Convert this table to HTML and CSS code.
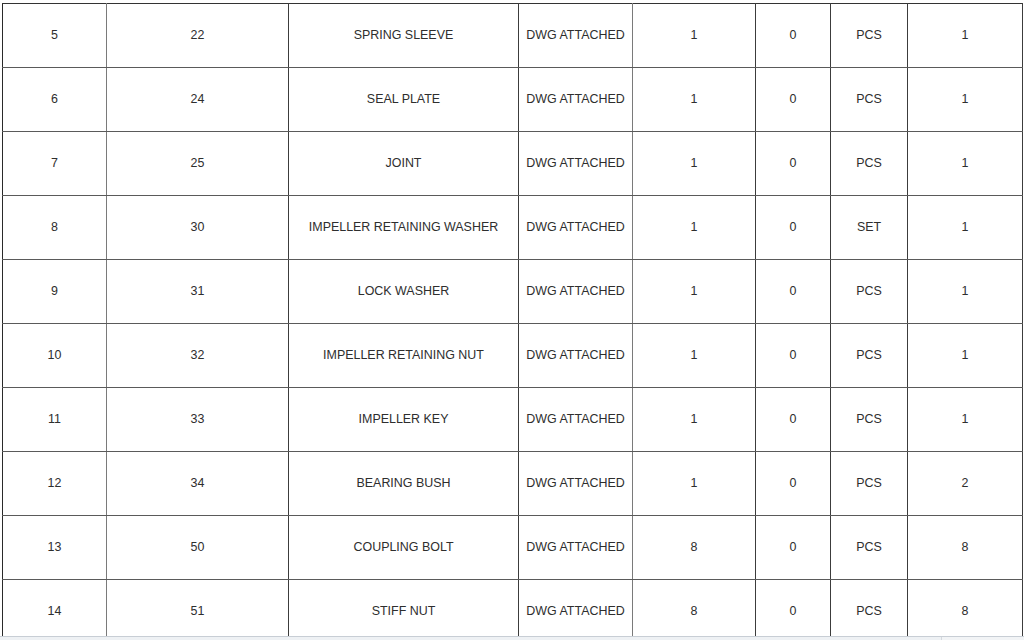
FILE: index.html
```html
<!DOCTYPE html>
<html>
<head>
<meta charset="utf-8">
<link rel="stylesheet" href="styles.css">
</head>
<body>
<div class="wrap">
<table class="parts">
<colgroup>
<col class="c1"><col class="c2"><col class="c3"><col class="c4"><col class="c5"><col class="c6"><col class="c7"><col class="c8">
</colgroup>
<tbody>
<tr><td class="soft">5</td><td>22</td><td>SPRING SLEEVE</td><td class="soft">DWG ATTACHED</td><td>1</td><td>0</td><td>PCS</td><td>1</td></tr>
<tr><td class="soft">6</td><td>24</td><td>SEAL PLATE</td><td class="soft">DWG ATTACHED</td><td>1</td><td>0</td><td>PCS</td><td>1</td></tr>
<tr><td class="soft">7</td><td>25</td><td>JOINT</td><td class="soft">DWG ATTACHED</td><td>1</td><td>0</td><td>PCS</td><td>1</td></tr>
<tr><td class="soft">8</td><td>30</td><td>IMPELLER RETAINING WASHER</td><td class="soft">DWG ATTACHED</td><td>1</td><td>0</td><td>SET</td><td>1</td></tr>
<tr><td class="soft">9</td><td>31</td><td>LOCK WASHER</td><td class="soft">DWG ATTACHED</td><td>1</td><td>0</td><td>PCS</td><td>1</td></tr>
<tr><td class="soft">10</td><td>32</td><td>IMPELLER RETAINING NUT</td><td class="soft">DWG ATTACHED</td><td>1</td><td>0</td><td>PCS</td><td>1</td></tr>
<tr><td class="soft">11</td><td>33</td><td>IMPELLER KEY</td><td class="soft">DWG ATTACHED</td><td>1</td><td>0</td><td>PCS</td><td>1</td></tr>
<tr><td class="soft">12</td><td>34</td><td>BEARING BUSH</td><td class="soft">DWG ATTACHED</td><td>1</td><td>0</td><td>PCS</td><td>2</td></tr>
<tr><td class="soft">13</td><td>50</td><td>COUPLING BOLT</td><td class="soft">DWG ATTACHED</td><td>8</td><td>0</td><td>PCS</td><td>8</td></tr>
<tr><td class="soft">14</td><td>51</td><td>STIFF NUT</td><td class="soft">DWG ATTACHED</td><td>8</td><td>0</td><td>PCS</td><td>8</td></tr>
</tbody>
</table>
</div>
<div class="scrollbar"><div class="thumb"></div></div>
</body>
</html>
```

FILE: styles.css
```css
html, body {
  margin: 0;
  padding: 0;
  background: #ffffff;
  overflow: hidden;
}
body {
  font-family: "Liberation Sans", Arial, sans-serif;
  font-size: 12.45px;
  color: #2e2e2e;
}
.wrap {
  padding: 3px 0 0 2px;
}
.parts {
  border-collapse: collapse;
  width: 1021px;
  table-layout: fixed;
}
.c1 { width: 104px; }
.c2 { width: 182px; }
.c3 { width: 230px; }
.c4 { width: 114px; }
.c5 { width: 123px; }
.c6 { width: 75px; }
.c7 { width: 77px; }
.c8 { width: 115px; }
.parts td {
  height: 62px;
  padding: 0 0 1px 0;
  text-align: center;
  vertical-align: middle;
  border: 1px solid #3c3c3c;
  border-top-color: #5a5a5a;
  border-bottom-color: #5a5a5a;
  white-space: nowrap;
}
.parts td.soft {
  border-right-color: #7a7a7a;
}
.parts tr td:first-child {
  border-left-color: #2a2a2a;
}
.parts tr:first-child td {
  border-top-color: #333333;
}
.scrollbar {
  position: fixed;
  left: 0;
  right: 0;
  bottom: 0;
  height: 3px;
  border-top: 1px solid #c8ced5;
  background: #f2f4f6;
}
.thumb {
  position: absolute;
  left: 0;
  top: 0;
  width: 941px;
  height: 3px;
  border-right: 1px solid #d4d9de;
  background: #eef1f4;
}
```
